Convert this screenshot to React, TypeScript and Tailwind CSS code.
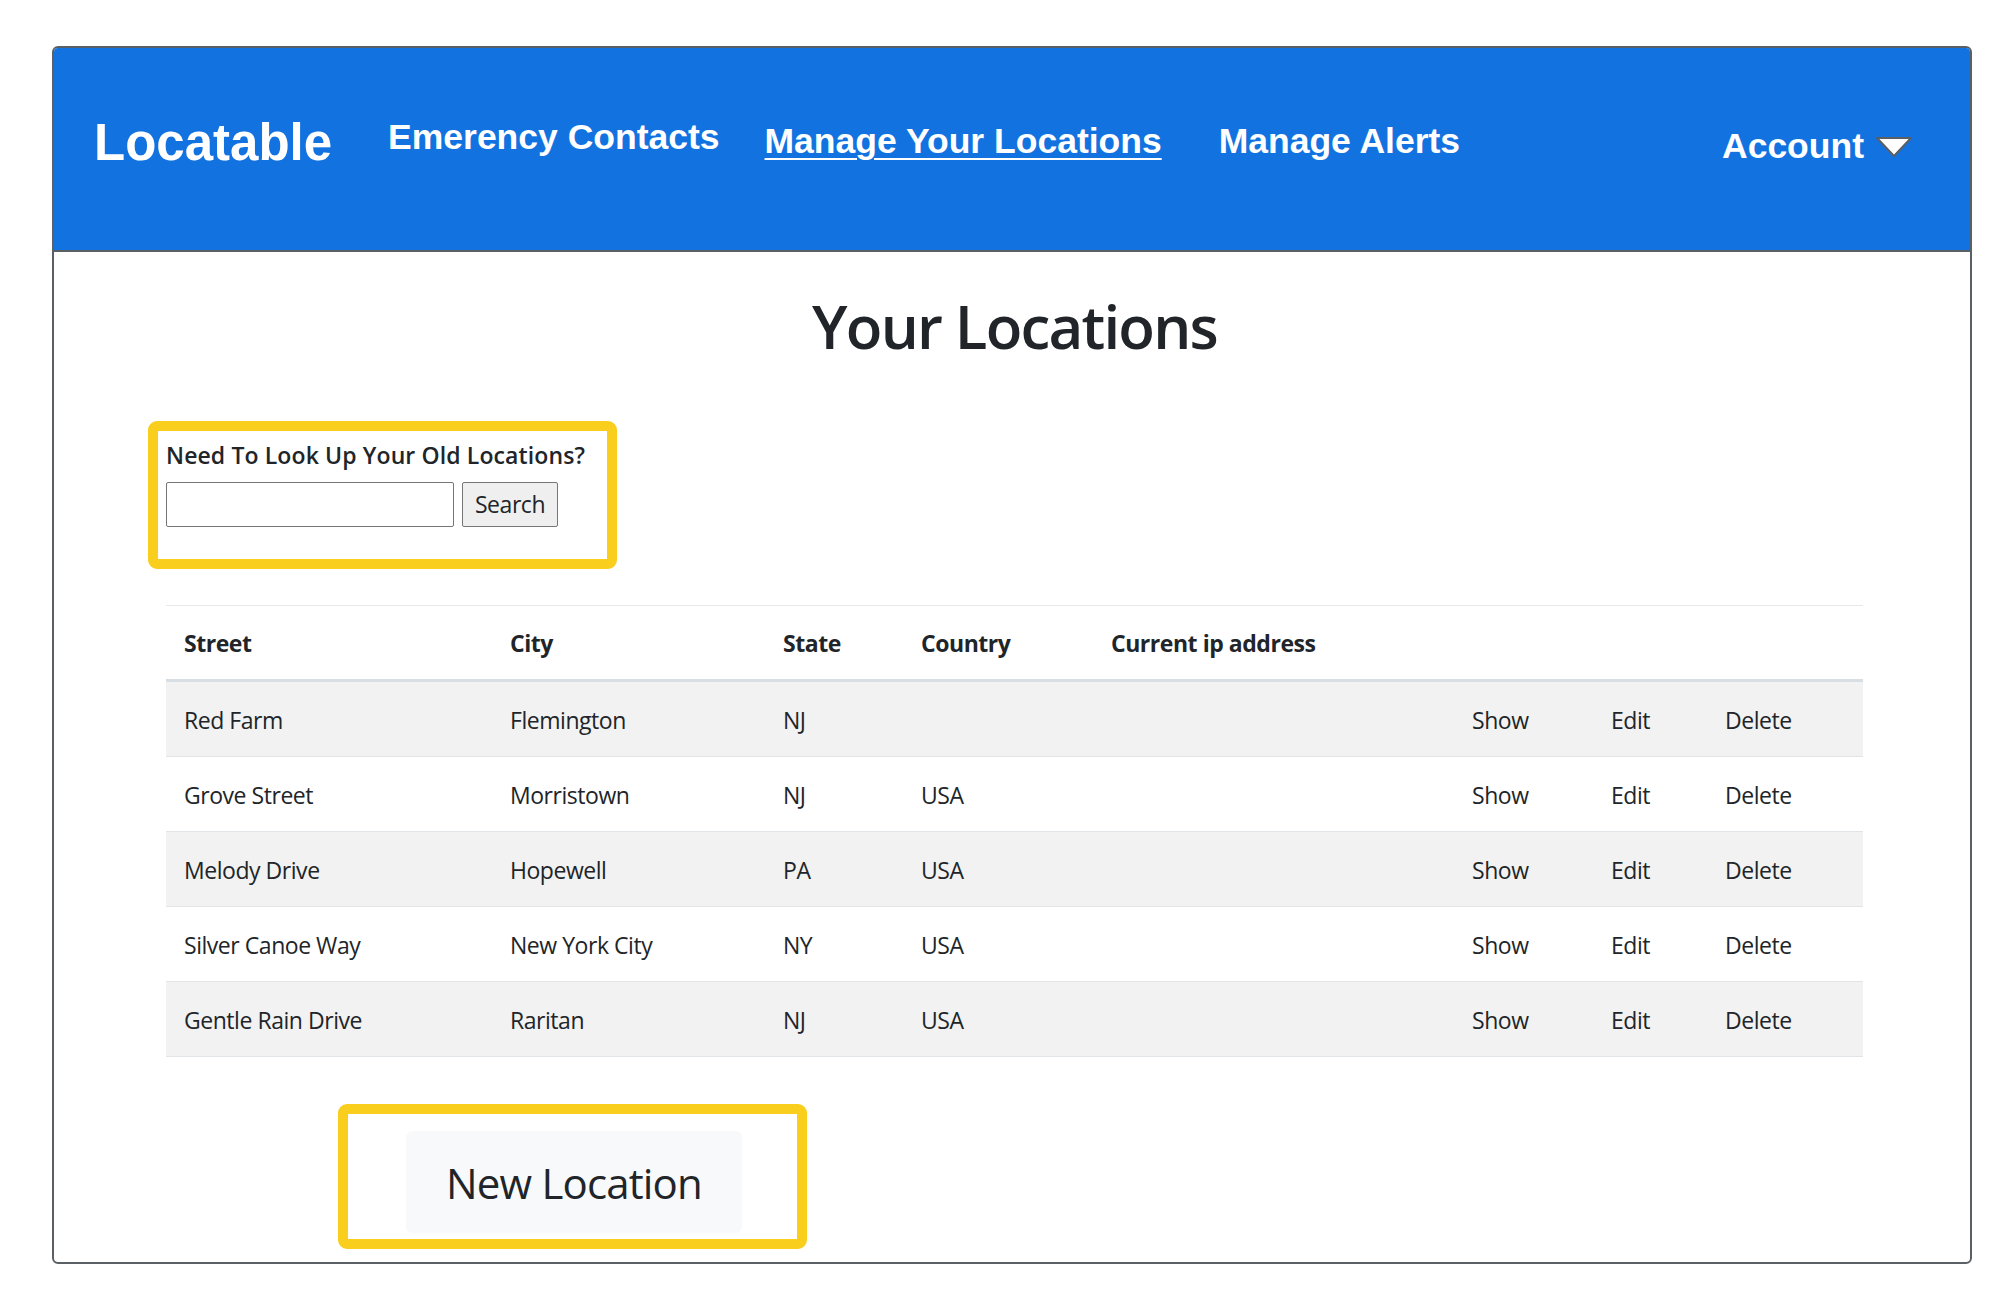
import React from "react";

type Loc = {
  street: string;
  city: string;
  state: string;
  country: string;
};

const locations: Loc[] = [
  { street: "Red Farm", city: "Flemington", state: "NJ", country: "" },
  { street: "Grove Street", city: "Morristown", state: "NJ", country: "USA" },
  { street: "Melody Drive", city: "Hopewell", state: "PA", country: "USA" },
  { street: "Silver Canoe Way", city: "New York City", state: "NY", country: "USA" },
  { street: "Gentle Rain Drive", city: "Raritan", state: "NJ", country: "USA" },
];

const navFont = "font-['Liberation_Sans',Arial,sans-serif] font-bold text-white leading-none";

const Caret = () => (
  <svg width="38" height="22" viewBox="0 0 38 22" className="ml-[11px]">
    <polygon
      points="2,2 36,2 19,20"
      fill="#ffffff"
      stroke="#5a5f66"
      strokeWidth="2"
      strokeLinejoin="round"
    />
  </svg>
);

const Header = () => (
  <header className="flex h-[204px] items-start border-b-2 border-[#5b6065] bg-[#1273e0] pl-[40px] pr-[57px]">
    <a className={`${navFont} pt-[69px] text-[51px]`}>Locatable</a>
    <a className={`${navFont} ml-[56px] pt-[72px] text-[35.5px]`}>Emerency Contacts</a>
    <a className={`${navFont} ml-[45px] pt-[76px] text-[35.5px] underline decoration-2 underline-offset-[5px]`}>
      Manage Your Locations
    </a>
    <a className={`${navFont} ml-[57px] pt-[76px] text-[35.5px]`}>Manage Alerts</a>
    <div className="ml-auto flex items-center pt-[81px]">
      <span className={`${navFont} text-[35.5px]`}>Account</span>
      <Caret />
    </div>
  </header>
);

const SearchBox = () => (
  <div className="-ml-[18px] w-[469px] rounded-[9px] border-[10px] border-[#f9ce1d] pb-[32px] pl-[8px] pt-[13px]">
    <label className="block text-[23px] font-semibold leading-none tracking-[0.005em] text-[#212529]">
      Need To Look Up Your Old Locations?
    </label>
    <div className="mt-[15px] flex gap-[8px]">
      <input
        type="text"
        className="h-[45px] w-[288px] rounded-[2px] border border-[#767676] bg-white px-2"
      />
      <button className="h-[45px] w-[96px] rounded-[2px] border border-[#767676] bg-[#efefef] text-[23px] tracking-[-0.02em] text-[#212529]">
        Search
      </button>
    </div>
  </div>
);

const LocationsTable = () => (
  <table className="mt-[36px] w-full table-fixed border-collapse text-left text-[23px] leading-[36px] tracking-[-0.02em] text-[#212529]">
    <colgroup>
      <col className="w-[326px]" />
      <col className="w-[273px]" />
      <col className="w-[138px]" />
      <col className="w-[190px]" />
      <col className="w-[361px]" />
      <col className="w-[139px]" />
      <col className="w-[114px]" />
      <col />
    </colgroup>
    <thead>
      <tr className="border-t border-b-[3px] border-t-[#e6e8ea] border-b-[#d9dee2]">
        <th className="px-[18px] pb-[18px] pt-[19px] font-bold">Street</th>
        <th className="px-[18px] pb-[18px] pt-[19px] font-bold">City</th>
        <th className="px-[18px] pb-[18px] pt-[19px] font-bold">State</th>
        <th className="px-[18px] pb-[18px] pt-[19px] font-bold">Country</th>
        <th className="whitespace-nowrap px-[18px] pb-[18px] pt-[19px] font-bold">Current ip address</th>
        <th colSpan={3} />
      </tr>
    </thead>
    <tbody>
      {locations.map((loc, i) => (
        <tr
          key={loc.street}
          className={`border-b border-[#e2e5e8] ${i % 2 === 0 ? "bg-[#f2f2f2]" : "bg-white"}`}
        >
          <td className="px-[18px] pb-[18px] pt-[20px]">{loc.street}</td>
          <td className="px-[18px] pb-[18px] pt-[20px]">{loc.city}</td>
          <td className="px-[18px] pb-[18px] pt-[20px]">{loc.state}</td>
          <td className="px-[18px] pb-[18px] pt-[20px]">{loc.country}</td>
          <td className="px-[18px] pb-[18px] pt-[20px]"></td>
          <td className="px-[18px] pb-[18px] pt-[20px]">
            <a>Show</a>
          </td>
          <td className="px-[18px] pb-[18px] pt-[20px]">
            <a>Edit</a>
          </td>
          <td className="px-[18px] pb-[18px] pt-[20px]">
            <a>Delete</a>
          </td>
        </tr>
      ))}
    </tbody>
  </table>
);

export default function App() {
  return (
    <div className="h-[1289px] w-full bg-white pl-[52px] pr-[36px] pt-[46px] font-['Open_Sans',sans-serif]">
      <div className="h-[1218px] overflow-hidden rounded-[6px] border-2 border-[#5b6065]">
        <Header />
        <main className="ml-[112px] w-[1697px]">
          <h1 className="mt-[44px] text-center text-[60px] font-semibold leading-none tracking-[-0.03em] text-[#212529]">
            Your Locations
          </h1>
          <div className="mt-[65px]">
            <SearchBox />
          </div>
          <LocationsTable />
          <div className="ml-[172px] mt-[47px] w-[469px] rounded-[9px] border-[10px] border-[#f9ce1d] pb-[6px] pl-[58px] pt-[17px]">
            <button className="flex h-[102px] w-[336px] items-center justify-center rounded-[6px] bg-[#f8f9fa] text-[42px] tracking-[-0.02em] text-[#212529]">
              New Location
            </button>
          </div>
        </main>
      </div>
    </div>
  );
}
